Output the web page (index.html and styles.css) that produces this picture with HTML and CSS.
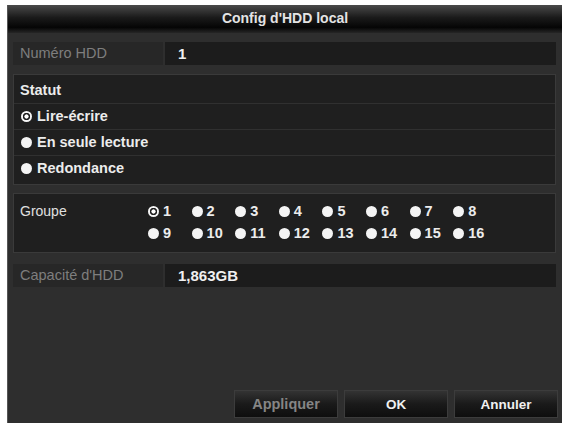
FILE: index.html
```html
<!DOCTYPE html>
<html>
<head>
    <meta charset="UTF-8">
    <title>Config d'HDD local</title>
    <link rel="stylesheet" href="styles.css">
</head>
<body>
    <div class="dialog">
        <div class="title">Config d'HDD local</div>
        <div class="content">
            <div class="field">
                <div class="field-label">Numéro HDD</div>
                <div class="field-value">1</div>
            </div>

            <div class="panel status">
                <div class="status-row heading">Statut</div>
                <div class="status-row"><span class="radio on"></span>Lire-écrire</div>
                <div class="status-row"><span class="radio"></span>En seule lecture</div>
                <div class="status-row"><span class="radio"></span>Redondance</div>
            </div>

            <div class="panel group">
                <div class="group-label">Groupe</div>
                <div class="group-grid">
                    <span class="opt"><span class="radio on"></span>1</span>
                    <span class="opt"><span class="radio"></span>2</span>
                    <span class="opt"><span class="radio"></span>3</span>
                    <span class="opt"><span class="radio"></span>4</span>
                    <span class="opt"><span class="radio"></span>5</span>
                    <span class="opt"><span class="radio"></span>6</span>
                    <span class="opt"><span class="radio"></span>7</span>
                    <span class="opt"><span class="radio"></span>8</span>
                    <span class="opt"><span class="radio"></span>9</span>
                    <span class="opt"><span class="radio"></span>10</span>
                    <span class="opt"><span class="radio"></span>11</span>
                    <span class="opt"><span class="radio"></span>12</span>
                    <span class="opt"><span class="radio"></span>13</span>
                    <span class="opt"><span class="radio"></span>14</span>
                    <span class="opt"><span class="radio"></span>15</span>
                    <span class="opt"><span class="radio"></span>16</span>
                </div>
            </div>

            <div class="field capacity">
                <div class="field-label">Capacité d'HDD</div>
                <div class="field-value">1,863GB</div>
            </div>
        </div>
        <div class="actions">
            <button class="btn disabled">Appliquer</button>
            <button class="btn">OK</button>
            <button class="btn">Annuler</button>
        </div>
    </div>
</body>
</html>
```

FILE: styles.css
```css
body {
    margin: 0;
    background-color: #fff;
    font-family: "Liberation Sans", Arial, sans-serif;
    color: #fff;
}

.dialog {
    margin: 5px 0 0 7px;
    width: 555px;
    height: 418px;
    background-color: #2e2e2e;
    border-left: 1px solid #555;
    box-sizing: border-box;
    display: flex;
    flex-direction: column;
}

.title {
    height: 28px;
    line-height: 26px;
    text-align: center;
    font-size: 14px;
    font-weight: bold;
    color: #e4e4e4;
    background: linear-gradient(#4a4a4a, #1a1a1a 45%, #050505 80%, #262626);
}

.content {
    flex: 1;
    padding: 9px 6px 0 5px;
    display: flex;
    flex-direction: column;
}

.field {
    display: flex;
    gap: 2px;
    height: 23px;
}

.field-label {
    width: 150px;
    background-color: #272727;
    color: #7e7e7e;
    font-size: 14.5px;
    line-height: 23px;
    padding-left: 7px;
    box-sizing: border-box;
}

.field-value {
    flex: 1;
    background-color: #1c1c1c;
    font-size: 15px;
    font-weight: bold;
    line-height: 23px;
    padding-left: 13px;
    color: #f0f0f0;
}

.panel {
    background-color: #1f1f1f;
    border: 1px solid #3a3a3a;
}

.status {
    margin-top: 9px;
    padding: 3px 0;
}

.status-row {
    height: 25px;
    line-height: 25px;
    padding-left: 7px;
    font-size: 14.5px;
    font-weight: bold;
    color: #ececec;
    display: flex;
    align-items: center;
    gap: 5px;
    border-top: 1px solid #303030;
}

.status-row.heading {
    border-top: none;
    padding-left: 6px;
}

.radio {
    width: 11px;
    height: 11px;
    border-radius: 50%;
    background-color: #f4f4f4;
    display: inline-block;
    flex-shrink: 0;
}

.radio.on {
    background: radial-gradient(circle, #fff 0 1.8px, #1f1f1f 2.4px 3.4px, #f4f4f4 4px);
}

.group {
    margin-top: 8px;
    height: 60px;
    box-sizing: border-box;
    display: flex;
    align-items: flex-start;
    padding: 9px 0 0 6px;
}

.group-label {
    width: 128px;
    font-size: 14px;
    color: #e0e0e0;
    line-height: 16px;
}

.group-grid {
    display: grid;
    grid-template-columns: repeat(8, 43.6px);
    row-gap: 6px;
    font-size: 14.5px;
    font-weight: bold;
    color: #ececec;
}

.opt {
    display: flex;
    align-items: center;
    gap: 4px;
    height: 16px;
}

.capacity {
    margin-top: 11px;
}

.actions {
    display: flex;
    justify-content: flex-end;
    gap: 6px;
    padding: 0 4px 5px 0;
}

.btn {
    width: 104px;
    height: 28px;
    border: 1px solid #3c3c3c;
    background: linear-gradient(#333, #1a1a1a 50%, #0e0e0e);
    color: #f0f0f0;
    font-family: "Liberation Sans", Arial, sans-serif;
    font-size: 13.5px;
    font-weight: bold;
}

.btn.disabled {
    color: #858585;
    font-size: 14.5px;
}
```
